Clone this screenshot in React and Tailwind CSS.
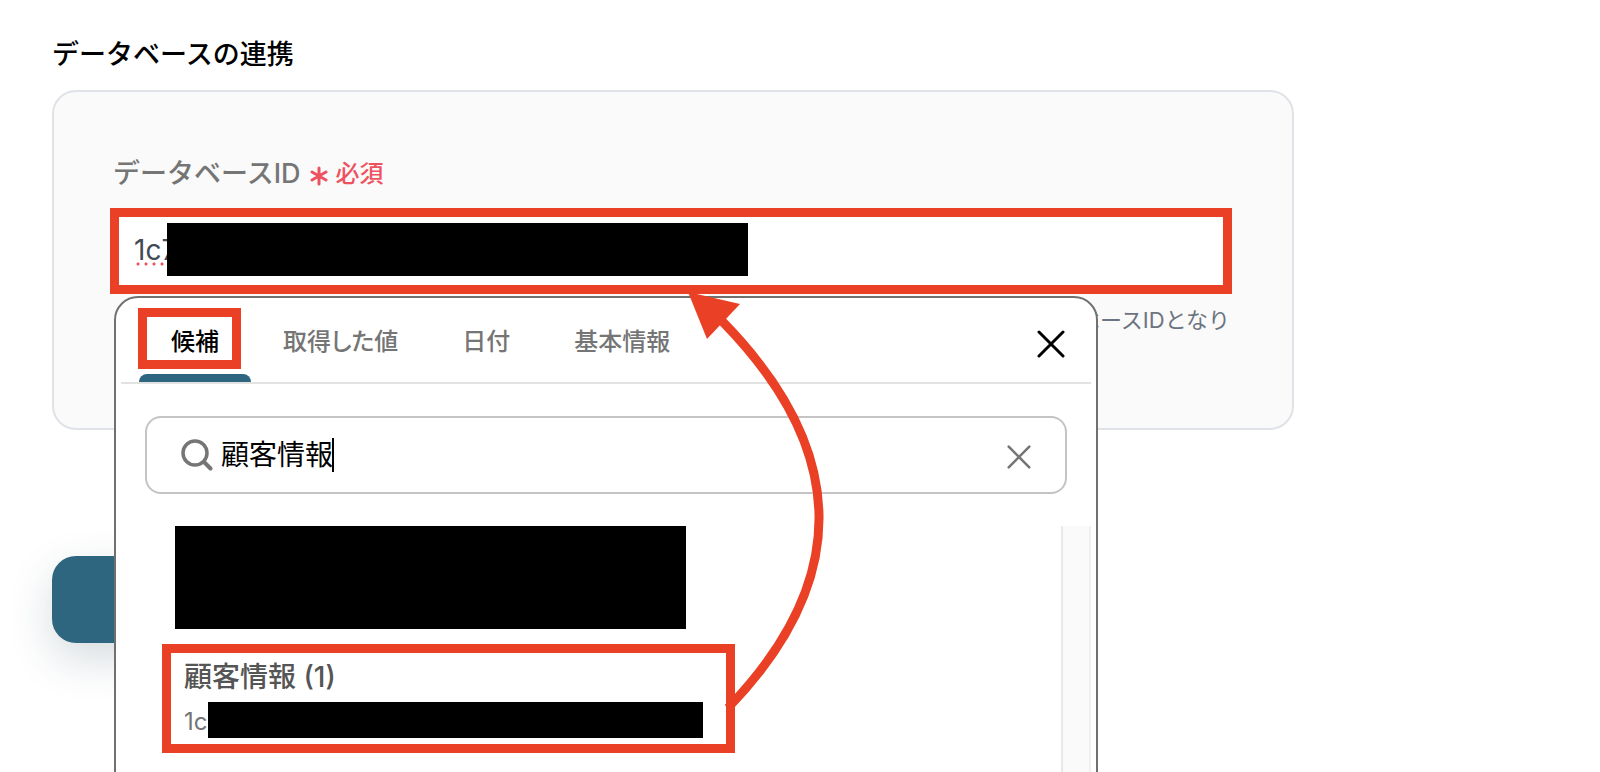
import { useState } from "react";

const tabs = ["候補", "取得した値", "日付", "基本情報"];

const Cross = ({ className, width }) => (
  <svg
    viewBox="0 0 28 28"
    className={className}
    fill="none"
    stroke="currentColor"
    strokeWidth={width}
    strokeLinecap="round"
    aria-hidden="true"
  >
    <path d="M2 2L26 26M26 2L2 26" />
  </svg>
);

const Asterisk = () => (
  <svg
    viewBox="0 0 18 20"
    className="mt-1 h-5 w-[18px]"
    fill="none"
    stroke="currentColor"
    strokeWidth="3"
    strokeLinecap="round"
    aria-hidden="true"
  >
    <path d="M9 2V18M2 6L16 14M16 6L2 14" />
  </svg>
);

const SearchIcon = () => (
  <svg
    viewBox="0 0 32 32"
    className="h-8 w-8 shrink-0 text-[#757575]"
    fill="none"
    stroke="currentColor"
    strokeWidth="3.5"
    strokeLinecap="round"
    aria-hidden="true"
  >
    <circle cx="14" cy="14" r="12" />
    <path d="M23 23L29.5 29.5" strokeWidth="4" />
  </svg>
);

// goes from the chosen candidate up to the ID field
const Arrow = () => (
  <svg
    viewBox="0 0 160 430"
    className="pointer-events-none absolute left-[570px] top-[82px] z-20 h-[430px] w-40"
    aria-hidden="true"
  >
    <path
      d="M48 418Q233 226 42 31"
      fill="none"
      stroke="#ea4025"
      strokeWidth="9"
    />
    <path d="M8 2L60 14L27 49Z" fill="#ea4025" />
  </svg>
);

const CandidatePopup = () => {
  const [active, setActive] = useState("候補");
  const [keyword, setKeyword] = useState("顧客情報");

  return (
    <div className="absolute left-1 top-[88px] z-10 w-[984px] rounded-t-3xl border-2 border-[#707070] bg-white px-[5px]">
      <div className="flex h-[86px] items-center border-b-2 border-[#e2e2e2] pl-[18px] pr-[26px]">
        <div role="tablist" className="flex h-full flex-1">
          {tabs.map((tab) => (
            <button
              key={tab}
              type="button"
              role="tab"
              aria-selected={tab === active}
              onClick={() => setActive(tab)}
              className={`relative px-8 pt-1 text-2xl font-medium [font-feature-settings:'palt'] ${
                tab === active ? "text-black" : "text-[#757575]"
              }`}
            >
              {tab}
              {tab === active && (
                <>
                  <span className="absolute -left-px top-[10px] h-[61px] w-[103px] border-9 border-[#ea4025]" />
                  <span className="absolute bottom-0 left-0 h-2 w-full rounded-t-lg bg-[#2e6680]" />
                </>
              )}
            </button>
          ))}
        </div>
        <button type="button" aria-label="閉じる" className="mt-2">
          <Cross className="h-7 w-7 text-black" width={3} />
        </button>
      </div>

      <div className="relative mx-6 mt-8 flex h-[78px] items-center gap-2 rounded-2xl border-2 border-[#c4c4c4] px-[34px]">
        <SearchIcon />
        <input
          type="text"
          aria-label="候補を検索"
          value={keyword}
          onChange={(e) => setKeyword(e.target.value)}
          className="h-10 min-w-0 flex-1 text-[28px] text-black outline-none"
        />
        <span className="absolute left-[185px] top-5 h-[34px] w-0.5 bg-black" />
        <button
          type="button"
          aria-label="クリア"
          onClick={() => setKeyword("")}
          className="mt-1"
        >
          <Cross className="h-6 w-6 text-[#757575]" width={3} />
        </button>
      </div>

      <div className="mt-8 flex h-[400px]">
        <div className="flex-1 pl-[41px]">
          <div className="ml-[13px] h-[103px] w-[511px] bg-black" />
          <button
            type="button"
            className="mt-[15px] flex h-[109px] w-[573px] flex-col border-9 border-[#ea4025] pl-[13px] pt-1 text-left"
          >
            <span className="text-[28px] font-medium leading-10 text-[#555]">
              顧客情報 (1)
            </span>
            <span className="mt-[5px] flex text-2xl leading-10 text-[#757575]">
              <span className="w-6">1c</span>
              <span className="h-9 w-[495px] bg-black" />
            </span>
          </button>
        </div>
        <div className="w-[30px] border-x-2 border-l-[#e8e8e8] border-r-[#f0f0f0] bg-[#fafafa]" />
      </div>
    </div>
  );
};

const App = () => {
  const [databaseId, setDatabaseId] = useState("1c7");

  return (
    <main className="h-screen overflow-hidden bg-white px-[52px] pt-[37px] font-['Inter','Noto_Sans_CJK_JP',sans-serif]">
      <h2 className="text-[27px] font-medium leading-9 text-black">
        データベースの連携
      </h2>

      <section className="mt-[17px] max-w-[1242px] rounded-3xl border-2 border-[#dfe2e6] bg-[#fafafa] pb-[92px] pl-14 pr-[60px] pt-16">
        <label
          htmlFor="database-id"
          className="flex items-center pl-[3px] text-[27px] font-medium leading-9 text-[#757575]"
        >
          データベースID
          <span className="ml-[9px] flex items-center gap-2 text-2xl text-[#ee5260]">
            <Asterisk />
            必須
          </span>
        </label>

        <div className="relative mt-4">
          <input
            id="database-id"
            type="text"
            value={databaseId}
            onChange={(e) => setDatabaseId(e.target.value)}
            className="block h-[86px] w-full border-9 border-[#ea4025] bg-white px-[15px] pb-0.5 text-[28px] text-[#414b56] outline-none"
          />
          <span className="absolute left-6 top-[54px] h-1 w-10 bg-[radial-gradient(circle,#ee5260_1px,transparent_2px)] bg-[length:8px_4px]" />
          <div className="absolute left-[57px] top-[15px] h-[53px] w-[581px] bg-black" />
          <CandidatePopup />
          <Arrow />
        </div>

        <p className="mt-[10px] pr-0.5 text-right text-[22px] leading-8 text-[#6b7480]">
          データベースIDとなり
        </p>
      </section>

      <button
        type="button"
        aria-label="次へ"
        className="mt-[126px] block h-[87px] w-[480px] rounded-3xl bg-[#2e6680] shadow-[0_16px_44px_rgba(30,60,75,0.18)]"
      />
    </main>
  );
};

export default App;
